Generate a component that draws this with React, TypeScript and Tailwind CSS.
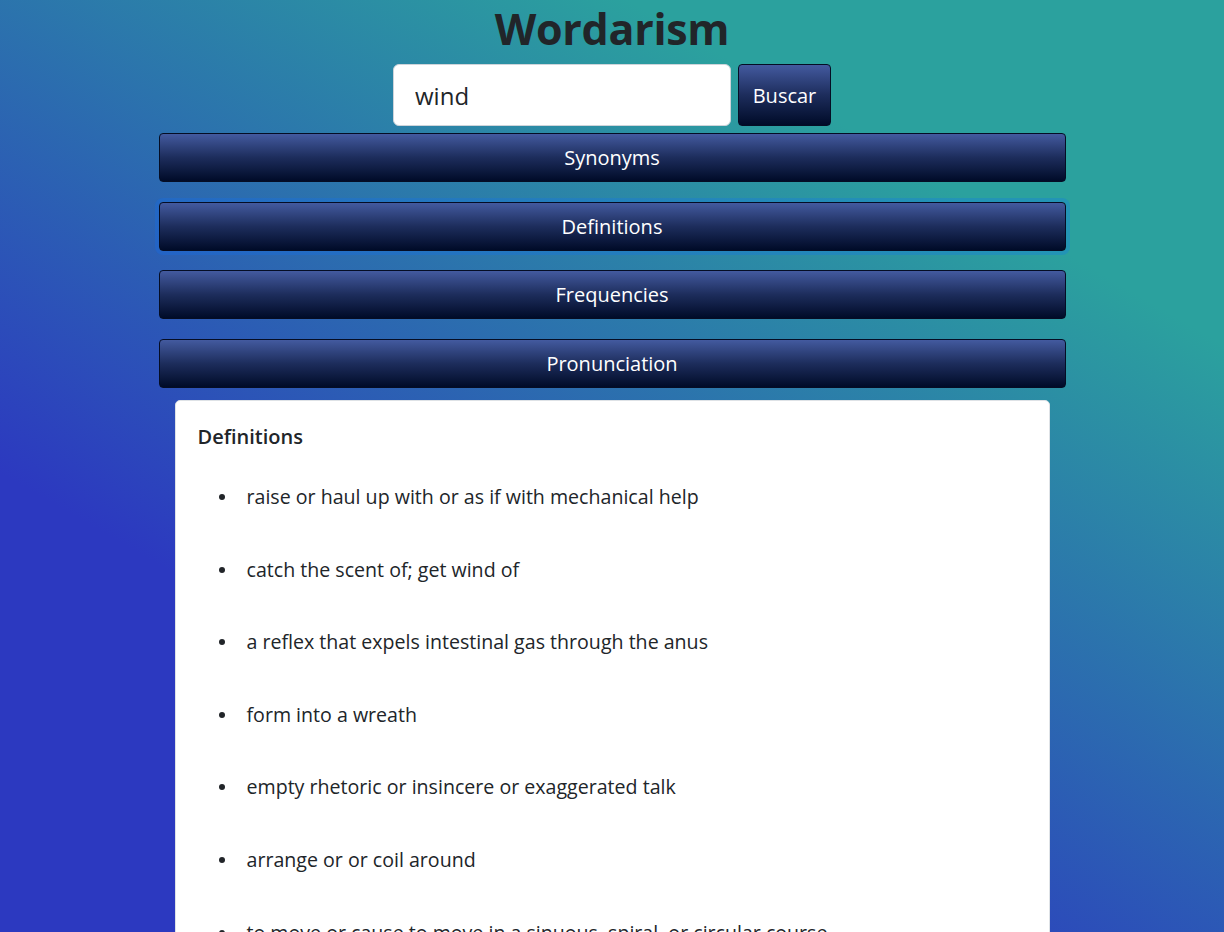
import React from "react";

const defs = [
  "raise or haul up with or as if with mechanical help",
  "catch the scent of; get wind of",
  "a reflex that expels intestinal gas through the anus",
  "form into a wreath",
  "empty rhetoric or insincere or exaggerated talk",
  "arrange or or coil around",
  "to move or cause to move in a sinuous, spiral, or circular course",
  "a tendency or force that influences events",
];

const sections = ["Synonyms", "Definitions", "Frequencies", "Pronunciation"];

export default function App() {
  return (
    <div
      className="h-[932px] overflow-hidden bg-[linear-gradient(30deg,#2c39c0_28%,#2ba19e_79%)] text-[#212529]"
      style={{ fontFamily: '"Open Sans", "Noto Sans", sans-serif' }}
    >
      <div className="flex flex-col items-center">
        <h1 className="m-0 text-[43px] font-bold leading-[58px] tracking-[-0.3px]">Wordarism</h1>
        <div className="mt-[6px] flex gap-[7px]">
          <input
            defaultValue="wind"
            className="h-[62px] w-[338px] rounded-[6px] border border-[#ced4da] bg-white pl-[21px] text-[24px] text-[#212529] outline-none"
            style={{ fontFamily: '"Open Sans", "Noto Sans", sans-serif' }}
          />
          <button className="h-[62px] w-[93px] rounded-[4px] border border-[#050d24] bg-[linear-gradient(180deg,#435a9f_0%,#1d2d5c_50%,#000b28_100%)] pt-[2px] text-[20px] text-white">
            Buscar
          </button>
        </div>
        <div className="mt-[7px] flex w-[907px] flex-col gap-[19.7px]">
          {sections.map((s) => (
            <button
              key={s}
              className={
                "h-[49px] w-full rounded-[4px] border border-[#050d24] bg-[linear-gradient(180deg,#435a9f_0%,#1d2d5c_50%,#000b28_100%)] pt-[1px] text-[20px] text-white" +
                (s === "Definitions" ? " shadow-[0_0_0_4px_rgba(13,110,253,0.25)]" : "")
              }
            >
              {s}
            </button>
          ))}
        </div>
        <div className="mt-[12px] w-[875px] rounded-[5px] border border-[#dee2e6] bg-white px-[22px] pt-[21px]">
          <h5 className="m-0 text-[20px] font-semibold leading-[30px]">Definitions</h5>
          <ul className="mt-[30px] list-none p-0">
            {defs.map((d) => (
              <li key={d} className="mb-[42.6px] flex items-center text-[19.6px] leading-[30px]">
                <span className="ml-[21px] mr-[22px] h-[6px] w-[6px] shrink-0 rounded-full bg-[#212529]" />
                <span>{d}</span>
              </li>
            ))}
          </ul>
        </div>
      </div>
    </div>
  );
}
